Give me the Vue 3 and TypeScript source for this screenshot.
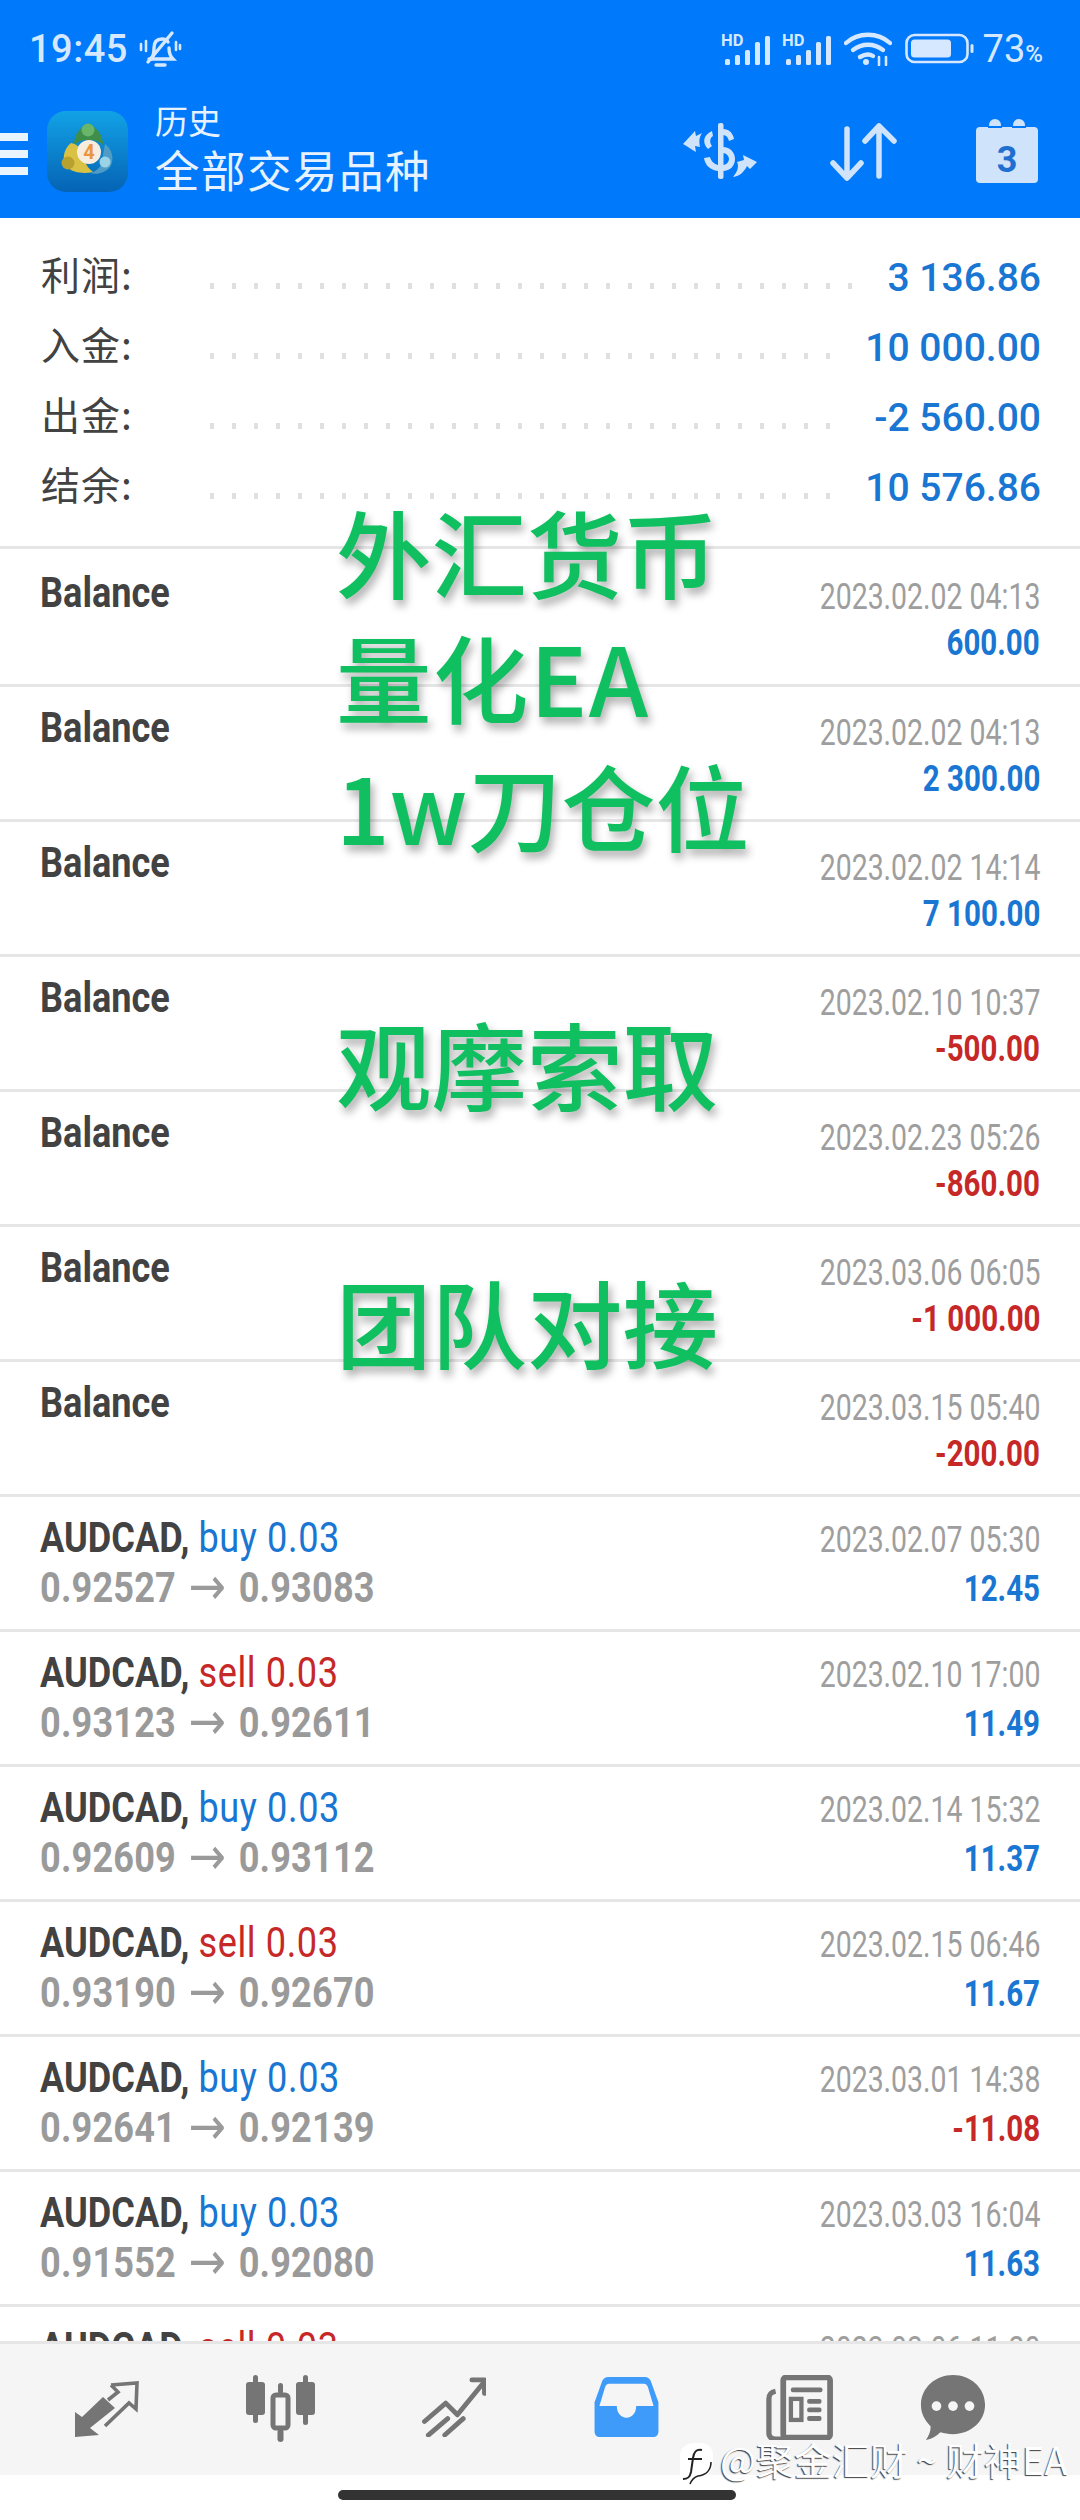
<script setup lang="ts">
type Sum = { label: string; value: string; dots: number }
type Row = { title?: string; pair?: string; side?: string; lot?: string; open?: string; close?: string; time: string; amount: string; neg?: boolean }

const summary: Sum[] = [
  { label: '利润:', value: '3 136.86', dots: 30 },
  { label: '入金:', value: '10 000.00', dots: 29 },
  { label: '出金:', value: '-2 560.00', dots: 29 },
  { label: '结余:', value: '10 576.86', dots: 29 },
]

const rows: Row[] = [
  { title: 'Balance', time: '2023.02.02 04:13', amount: '600.00' },
  { title: 'Balance', time: '2023.02.02 04:13', amount: '2 300.00' },
  { title: 'Balance', time: '2023.02.02 14:14', amount: '7 100.00' },
  { title: 'Balance', time: '2023.02.10 10:37', amount: '-500.00', neg: true },
  { title: 'Balance', time: '2023.02.23 05:26', amount: '-860.00', neg: true },
  { title: 'Balance', time: '2023.03.06 06:05', amount: '-1 000.00', neg: true },
  { title: 'Balance', time: '2023.03.15 05:40', amount: '-200.00', neg: true },
  { pair: 'AUDCAD,', side: 'buy', lot: '0.03', open: '0.92527', close: '0.93083', time: '2023.02.07 05:30', amount: '12.45' },
  { pair: 'AUDCAD,', side: 'sell', lot: '0.03', open: '0.93123', close: '0.92611', time: '2023.02.10 17:00', amount: '11.49' },
  { pair: 'AUDCAD,', side: 'buy', lot: '0.03', open: '0.92609', close: '0.93112', time: '2023.02.14 15:32', amount: '11.37' },
  { pair: 'AUDCAD,', side: 'sell', lot: '0.03', open: '0.93190', close: '0.92670', time: '2023.02.15 06:46', amount: '11.67' },
  { pair: 'AUDCAD,', side: 'buy', lot: '0.03', open: '0.92641', close: '0.92139', time: '2023.03.01 14:38', amount: '-11.08', neg: true },
  { pair: 'AUDCAD,', side: 'buy', lot: '0.03', open: '0.91552', close: '0.92080', time: '2023.03.03 16:04', amount: '11.63' },
  { pair: 'AUDCAD,', side: 'sell', lot: '0.03', open: '', close: '', time: '2023.03.06 11:20', amount: '' },
]

const bars = [
  { x: 4, y: 24, h: 6 },
  { x: 14, y: 20, h: 10 },
  { x: 24, y: 15, h: 15 },
  { x: 34, y: 7, h: 23 },
  { x: 44, y: 1, h: 29 },
]
</script>

<template>
  <div class="page">
    <header class="head">
      <div class="status">
        <span class="clock">19:45</span>
        <svg class="mute" viewBox="0 0 46 40" width="46" height="40" fill="none" stroke="#d5e8ff" stroke-width="3.4" stroke-linecap="round">
          <path d="M14 30c3-3 3-6 3-11 0-6 3-9 8-9 3 0 5 1 6 3" />
          <path d="M32 19c0 5 1 8 4 11H12" />
          <path d="M11 33 35 4" />
          <path d="M19 36h9" />
          <path d="M4 15v6M9 12v10M39 13v8M43 16v4" stroke-width="2.6" />
        </svg>
        <div class="status-right">
          <svg v-for="n in 2" :key="n" class="signal" viewBox="0 0 50 31" width="50" height="31" fill="#d5e8ff">
            <text x="0" y="11" class="hd">HD</text>
            <rect v-for="b in bars" :key="b.x" :x="b.x" :y="b.y" width="5" :height="b.h" rx="1.6" />
          </svg>
          <svg class="wifi" viewBox="0 0 48 34" width="48" height="34" fill="none" stroke="#d5e8ff" stroke-width="4.4" stroke-linecap="round">
            <path d="M2 11C14 0 34 0 46 11" />
            <path d="M9 18c9-7 21-7 30 0" />
            <path d="M16 25c5-3 10-3 13-1" />
            <circle cx="22" cy="30" r="3" fill="#d5e8ff" stroke="none" />
            <path d="M35 25v8M42 25v8" stroke-width="2.6" />
          </svg>
          <svg class="batt" viewBox="0 0 70 32" width="70" height="32">
            <rect x="1.5" y="2" width="61" height="27" rx="8" fill="none" stroke="#d5e8ff" stroke-width="2.6" />
            <rect x="6" y="6.5" width="40" height="18" rx="3.5" fill="#d5e8ff" />
            <rect x="65.5" y="11" width="3" height="9" rx="1.5" fill="#d5e8ff" />
          </svg>
          <span class="pct">73<small>%</small></span>
        </div>
      </div>
      <div class="bar">
        <div class="burger"><i></i><i></i><i></i></div>
        <svg class="logo" viewBox="0 0 81 81" width="81" height="81">
          <defs>
            <linearGradient id="lg" x1="0" y1="0" x2="0" y2="1">
              <stop offset="0" stop-color="#12a2e6" />
              <stop offset="1" stop-color="#0563b4" />
            </linearGradient>
          </defs>
          <rect width="81" height="81" rx="19" fill="url(#lg)" />
          <path d="M41 13c9 3 15 11 15 21-4-4-9-5-15-5-5 0-10 1-14 5 0-10 6-18 14-21z" fill="#3f8f4a" />
          <circle cx="41" cy="19" r="6.5" fill="#69b56a" />
          <path d="M24 32c8 1 11 8 14 18 1 4 4 8 8 11-9 2-20 1-26-5-6-7-3-19 4-24z" fill="#d9c243" />
          <circle cx="21" cy="52" r="6.5" fill="#b9a12f" />
          <path d="M58 33c7 5 10 15 5 23-5 6-13 8-20 6 7-2 11-6 12-12 1-6 2-12 3-17z" fill="#4f9cc6" />
          <circle cx="58" cy="51" r="5.5" fill="#9ad2e6" />
          <circle cx="42" cy="41" r="12" fill="#f8ecdd" />
          <text x="42" y="48" class="four">4</text>
        </svg>
        <div class="titles">
          <div class="t1">历史</div>
          <div class="t2">全部交易品种</div>
        </div>
        <div class="actions">
          <svg class="act-a" viewBox="0 0 74 56" width="74" height="56" fill="#cfe3fb">
            <rect x="35" y="0" width="5.5" height="56" rx="2" />
            <path d="M40 6c6 0 10 4 11 10l-5 2c-1-4-3-6-6-6zM40 24c7 0 12 5 12 12s-5 12-12 12v-6c3 0 6-3 6-6s-3-6-6-6z" />
            <path d="M29 8l1 5c-3 2-4 6-1 10l-4 3c-6-6-5-14 4-18zM21 35l6-1c1 4 4 7 8 8v6c-8-1-13-6-14-13z" />
            <path d="M0 21 12 8l1 5 6-3c-3 5-3 8-2 14l-5-1 1 6c-5-3-8-5-13-8z" />
            <path d="M74 39 60 32l1 5-7 2c2 4 1 9-4 15 7-1 11-5 14-11l3 3z" />
          </svg>
          <svg class="act-b" viewBox="0 0 68 58" width="68" height="58" fill="none" stroke="#cfe3fb" stroke-width="5.5" stroke-linecap="round" stroke-linejoin="round">
            <path d="M17 6v48M3 40l14 15 14-15" />
            <path d="M49 3v50M35 18 49 3l15 15" />
          </svg>
          <svg class="act-c" viewBox="0 0 62 64" width="62" height="64">
            <rect y="8" width="62" height="56" rx="4" fill="#cfe3fb" />
            <circle cx="19" cy="6" r="6" fill="#cfe3fb" />
            <circle cx="43" cy="6" r="6" fill="#cfe3fb" />
            <path d="M12 8h14M36 8h14" stroke="#0079fb" stroke-width="2" />
            <text x="31" y="53" class="cal">3</text>
          </svg>
        </div>
      </div>
    </header>

    <section class="summary">
      <div v-for="s in summary" :key="s.label" class="sum-row">
        <span class="sum-label">{{ s.label }}</span>
        <span class="dots"><i v-for="n in s.dots" :key="n"></i></span>
        <span class="sum-value">{{ s.value }}</span>
      </div>
    </section>

    <section class="list">
      <div v-for="(r, i) in rows" :key="i" class="row" :class="r.title ? 'is-bal' : 'is-trade'">
        <div class="left">
          <div v-if="r.title" class="name sq">{{ r.title }}</div>
          <template v-else>
            <div class="name sq">{{ r.pair }} <span class="lot" :class="r.side">{{ r.side }} {{ r.lot }}</span></div>
            <div v-if="r.open" class="prices sq">{{ r.open }} <span class="arrow">→</span> {{ r.close }}</div>
          </template>
        </div>
        <div class="right">
          <div class="time">{{ r.time }}</div>
          <div class="amount" :class="{ neg: r.neg }">{{ r.amount }}</div>
        </div>
      </div>
    </section>

    <div class="promo">
      <div class="p p1">外汇货币</div>
      <div class="p p2">量化EA</div>
      <div class="p p3">1w刀仓位</div>
      <div class="p p4">观摩索取</div>
      <div class="p p5">团队对接</div>
    </div>

    <nav class="tabs">
      <svg class="ic1" viewBox="0 0 65 57" width="65" height="57">
        <path d="M0 57V32l7 5 21-20 12 11-25 20 9 7z" fill="#757575" />
        <path d="M36 5 62 3l-1 26-7-6-24 23M36 5l7 7-10 8" fill="none" stroke="#757575" stroke-width="3.6" />
      </svg>
      <svg class="ic2" viewBox="0 0 69 67" width="69" height="67" fill="#757575">
        <rect x="0" y="7" width="19" height="33" rx="3" />
        <rect x="7" y="0" width="5" height="48" rx="2.5" />
        <rect x="50" y="7" width="19" height="33" rx="3" />
        <rect x="57" y="0" width="5" height="50" rx="2.5" />
        <rect x="27" y="20" width="15" height="33" rx="3" fill="none" stroke="#757575" stroke-width="5" />
        <rect x="32" y="8" width="5" height="11" rx="2.5" />
        <rect x="31.5" y="54" width="6" height="13" rx="3" />
      </svg>
      <svg class="ic3" viewBox="0 0 66 62" width="65" height="60" fill="none" stroke="#757575" stroke-width="5" stroke-linecap="round" stroke-linejoin="round">
        <path d="M3 46 25 27l12 12L64 6" />
        <path d="M52 3h13v14" />
        <path d="M7 60l20-17M24 60l19-17" />
      </svg>
      <svg class="ic4" viewBox="0 0 66 62" width="65" height="60">
        <path d="M14 0h38c3 0 5 2 6 4l8 22v30c0 4-2 6-6 6H6c-4 0-6-2-6-6V26L8 4c1-2 3-4 6-4z" fill="#3f9bfa" />
        <path d="M15 7h36c2 0 3 1 4 3l6 20H43c0 7-4 12-10 12s-10-5-10-12H5l6-20c1-2 2-3 4-3z" fill="#f5f5f5" />
      </svg>
      <svg class="ic5" viewBox="0 0 70 68" width="69" height="65">
        <rect x="18" y="2.5" width="49" height="63" rx="3" fill="none" stroke="#757575" stroke-width="6" />
        <path d="M10 17C5 18 3 20 3 25v36c0 4 3 6 7 6h14" fill="none" stroke="#757575" stroke-width="5.5" />
        <rect x="26" y="13" width="33" height="5" rx="2" fill="#757575" />
        <rect x="26" y="25" width="11" height="22" fill="none" stroke="#757575" stroke-width="4.5" />
        <rect x="43" y="25" width="15" height="5" rx="2" fill="#757575" />
        <rect x="43" y="34" width="15" height="5" rx="2" fill="#757575" />
        <rect x="43" y="43" width="15" height="5" rx="2" fill="#757575" />
      </svg>
      <svg class="ic6" viewBox="0 0 66 68" width="66" height="66">
        <path d="M33 0c18 0 33 13 33 31 0 17-15 30-33 30-5 0-9-1-13-2-4 4-9 7-15 8 3-4 5-9 5-14C4 47 0 40 0 31 0 13 15 0 33 0z" fill="#757575" />
        <circle cx="16" cy="32" r="5" fill="#f5f5f5" />
        <circle cx="33" cy="32" r="5" fill="#f5f5f5" />
        <circle cx="50" cy="32" r="5" fill="#f5f5f5" />
      </svg>
    </nav>

    <div class="homebar"><span class="pill"></span></div>

    <div class="mark">
      <svg viewBox="0 0 36 44" width="36" height="44" fill="none" stroke="#222" stroke-width="2">
        <path d="M2 14C2 6 8 1 16 1h6c8 0 13 5 13 12v8c0 8-6 13-13 13H2z" fill="#fff" stroke="none" />
        <path d="M24 8c-6-1-8 2-9 8l-2 14c-1 5-3 7-8 7" />
        <path d="M10 17h14" />
        <path d="M33 20c0 8-5 13-13 14-3 1-6 3-8 8" stroke-width="1.6" />
      </svg>
      <span>@聚金汇财 ~ 财神EA</span>
    </div>
  </div>
</template>

<style>
html, body { margin: 0; background: #fff; }
</style>

<style scoped>
.page {
  position: relative;
  width: 1080px;
  height: 2520px;
  overflow: hidden;
  background: #fff;
  font-family: Roboto, "Noto Sans CJK SC", sans-serif;
}

.head { height: 218px; background: #0079fb; color: #eaf4ff; }
.status { height: 100px; display: flex; align-items: center; padding: 0 37px 0 29px; box-sizing: border-box; }
.clock { font: 500 38px Roboto, sans-serif; color: #d5e8ff; letter-spacing: 0.5px; margin-top: -2px; }
.mute { margin-left: 9px; margin-top: -2px; }
.status-right { margin-left: auto; display: flex; align-items: center; gap: 11px; margin-top: -2px; }
.hd { font: 700 16.5px Roboto, sans-serif; }
.signal { margin-top: 2px; overflow: visible; }
.wifi { margin-left: 1px; }
.batt { margin-left: 2px; }
.pct { font: 400 38px Roboto, sans-serif; color: #d5e8ff; margin-left: -3px; }
.pct small { font-size: 24px; font-weight: 500; }

.bar { height: 118px; display: flex; align-items: flex-start; position: relative; }
.burger { width: 28px; display: flex; flex-direction: column; gap: 9px; padding-top: 33px; }
.burger i { display: block; height: 8px; background: #eaf4ff; }
.logo { margin: 11px 0 0 19px; flex: none; }
.titles { margin-left: 27px; }
.t1 { font: 400 33px/40px "Noto Sans CJK SC", sans-serif; color: #e6f2ff; }
.t2 { font: 400 44.5px/58px "Noto Sans CJK SC", sans-serif; color: #e6f2ff; letter-spacing: 1.5px; }
.actions { flex: 1; display: flex; align-items: flex-start; }
.act-a { margin: 23px 0 0 252px; }
.act-b { margin: 23px 0 0 73px; }
.act-c { margin: 19px 0 0 78px; }
.cal { font: 700 36px Roboto, sans-serif; fill: #1f6fd0; text-anchor: middle; }
.four { font: 700 20px Roboto, sans-serif; fill: #e8973f; text-anchor: middle; }

.summary { height: 328px; padding-top: 23px; box-sizing: border-box; }
.sum-row { height: 70px; padding: 0 39px 0 41px; display: flex; align-items: center; }
.sum-label { font: 400 39px "Noto Sans CJK SC", sans-serif; color: #424242; width: 169px; flex: none; letter-spacing: 1px; margin-top: -6px; }
.dots { display: flex; gap: 18px; margin-top: 20px; }
.dots i { display: block; width: 4px; height: 6px; background: #e0e0e0; }
.sum-value { margin-left: auto; font: 500 39px Roboto, sans-serif; color: #1976d2; white-space: nowrap; margin-top: 3px; }

.sq { width: max-content; transform: scaleX(0.86); transform-origin: left center; white-space: nowrap; }

.row {
  height: 135px;
  box-sizing: border-box;
  border-top: 3px solid #e6e6e6;
  padding: 0 40px;
  display: flex;
  justify-content: space-between;
}
.row:first-child { height: 138px; }
.left { padding-top: 17px; }
.row:first-child .left { padding-top: 20px; }
.name { font: 700 42px/48px Roboto, sans-serif; color: #424242; }
.lot { font-weight: 400; letter-spacing: 0.7px; }
.lot.buy { color: #1976d2; }
.lot.sell { color: #c62828; }
.prices { font: 700 42px/48px Roboto, sans-serif; color: #9a9a9a; letter-spacing: 0.2px; }
.arrow { font: 400 52px/48px "DejaVu Sans", sans-serif; margin: 0 4px; letter-spacing: 0; vertical-align: -2px; }
.right { padding-top: 25px; }
.is-trade .right { padding-top: 22px; }
.row:first-child .right { padding-top: 27px; }
.time {
  width: max-content;
  margin-left: auto;
  font: 400 36px/42px Roboto, sans-serif;
  color: #9e9e9e;
  transform: scaleX(0.79);
  transform-origin: right center;
  white-space: nowrap;
}
.amount {
  width: max-content;
  margin-left: auto;
  margin-top: 1px;
  font: 700 36px/48px Roboto, sans-serif;
  color: #1976d2;
  transform: scaleX(0.82);
  transform-origin: right center;
  white-space: nowrap;
}
.is-trade .amount { margin-top: 4px; }
.amount.neg { color: #c62828; }

.promo { position: absolute; left: 336px; top: 0; width: 0; height: 0; }
.p {
  position: absolute;
  left: 0;
  font: 500 95.5px/100px "Noto Sans CJK SC", sans-serif;
  color: #10bf60;
  white-space: nowrap;
  text-shadow: 3px 6px 8px rgba(0, 0, 0, 0.32);
}
.p1 { top: 501px; }
.p2 { top: 626px; letter-spacing: 1.5px; }
.p3 { top: 754px; font-size: 94px; }
.p4 { top: 1013px; }
.p5 { top: 1271px; }

.tabs {
  position: absolute;
  left: 0;
  right: 0;
  top: 2341px;
  height: 134px;
  background: #f5f5f5;
  border-top: 3px solid #e6e6e6;
  box-sizing: border-box;
  display: grid;
  grid-template-columns: repeat(5, 173px) 134px;
  justify-items: center;
  align-items: start;
  padding: 31px 0 0 21px;
}
.ic1 { margin-top: 5px; }
.ic3, .ic4 { margin-top: 2px; }

.homebar { position: absolute; left: 0; right: 0; top: 2475px; height: 45px; background: #fff; }
.pill { position: absolute; left: 338px; top: 15px; width: 398px; height: 10px; border-radius: 5px; background: #333; }

.mark {
  position: absolute;
  left: 678px;
  top: 2431px;
  display: flex;
  align-items: center;
  gap: 6px;
  font: 400 38px "Noto Sans CJK SC", sans-serif;
  color: #fff;
  text-shadow: -1px 1px 1px rgba(0, 0, 0, 0.75);
  white-space: nowrap;
}
.mark svg { margin-top: 10px; }
</style>
